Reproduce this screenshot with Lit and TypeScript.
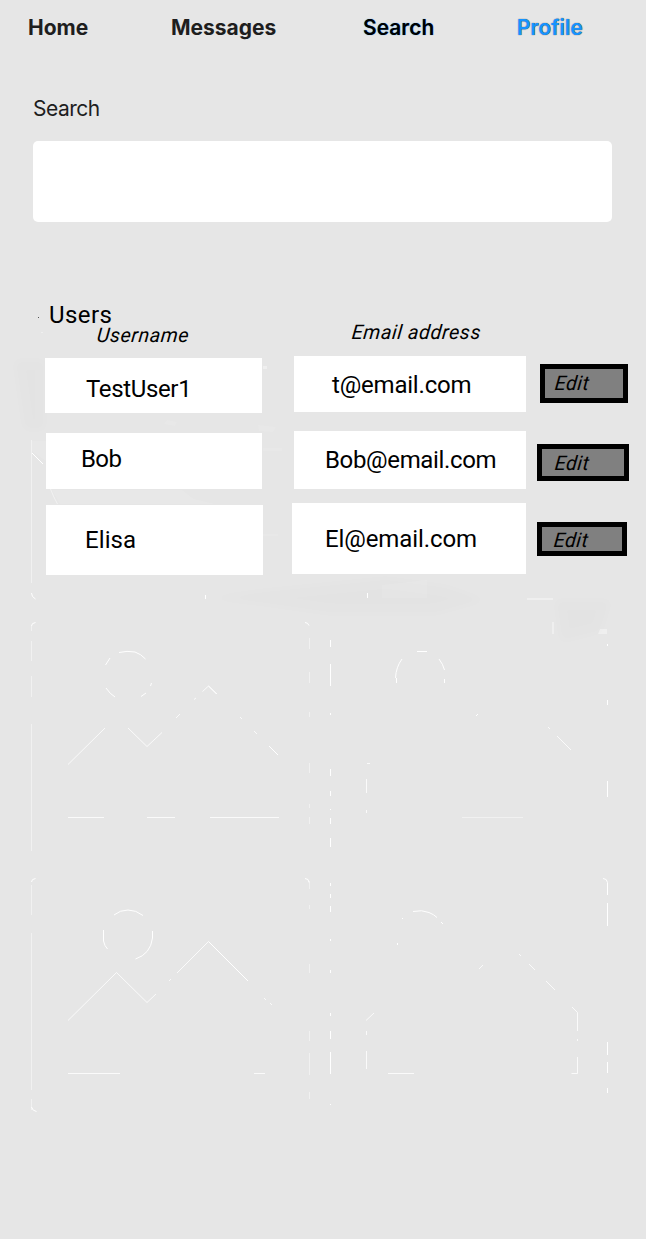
import { LitElement, html, css, svg } from "lit";
import { customElement } from "lit/decorators.js";

const rows = [
  { name: "TestUser1", email: "t@email.com" },
  { name: "Bob", email: "Bob@email.com" },
  { name: "Elisa", email: "El@email.com" },
];

// Faint picture placeholders lying behind the list.
@customElement("ghost-gallery")
export class GhostGallery extends LitElement {
  static styles = css`
    :host { display: block; }
    svg { display: block; }
    .line { fill: none; stroke: #fff; stroke-width: 1; }
    .soft { opacity: 0.45; }
    .mid { opacity: 0.8; }
    .haze { fill: #fff; opacity: 0.1; }
    .dim { fill: #000; opacity: 0.006; filter: blur(4px); }
    .glow { fill: #fff; opacity: 0.35; }
    .speck { fill: #555; }
  `;
  render() {
    return html`<svg width="646" height="1239" viewBox="0 0 646 1239" aria-hidden="true">
      ${svg`
      <path class="speck" d="M38 317h1v1h-1z"/>
      <path class="glow" d="M41 332h2v1h-2z"/>
      <path class="haze" d="M32 441h14v20l-14-10z M167 420l10 2-2 4-11-2z M168 497h17l30 7h-50z M258 425l18 2-3 5-14-1z M382 585l45-5v18h-45z M52 490h130l18 14H60z M263 448h19v3h-19z M263 534h15v2h-15z"/>
      <path class="dim" d="M14 360h31v70H24z M206 598l60-8 120-12 60 8 40 14-50 14H330l-70-10z M555 600h56l-10 32-40 10z"/>
      <path class="glow" d="M263 366h4v3h-4z M527 598h26v2h-26z M552 622h2v12h-2z M600 629h7v5h-9z"/>
      <path class="line soft" d="M31.5 440V583 M50.500 489q3 8 7 15 M31.5 626V631 M31.5 641V661 M31.5 676V697 M31.5 724V851 M309.5 638V649 M309.5 672V683 M309.5 712V717 M309.5 763V773 M309.5 804V808 M309.5 817V824 M31.5 885V915 M31.5 933V1090 M31.5 1099V1110 M309.5 881V889 M309.5 905V909 M309.5 964V973 M309.5 1031V1041 M309.5 1053V1075 M309.5 1092V1099 M462 817.5H523"/>
      <path class="line" d="M32 453l11 11 M31.500 593q0 4 4 6 M205.500 595v4 M367.500 593v5 M31.500 626q0-3 4-3.500 M305 622.500q3 0 4 3 M31.500 882q0-3 4-3.500 M305 878.500q4 0 4 4 M31.500 1107q1 4 5 4.500 M330.500 640V647 M330.500 664V686 M330.500 713V715 M330.500 769V776 M330.500 791V796 M330.500 809V810 M330.500 818V824 M330.500 838V847 M607.500 644V646 M607.500 700V705 M607.500 781V797"/>
      <path class="line" d="M119 652.500q8-2 16-.5q6 2 10.500 7 M105.500 665l4.500-7 M106 688q4 6 9 9 M150.500 686l1-3 M141 696.500l5-3.500"/>
      <path class="line mid" d="M68 764.500L105 728 M128 728L147 746.500L162 732.500 M176 718l4-4 M194 699.500l2-1.500 M202.500 691.500L208.500 686L217 694 M240 717l2 2 M254 731l3 3 M68 817.500h36 M147 817.500h28 M210 817.500h69"/>
      <path class="line" d="M269 746l9 9 M208.500 686l8 8 M208.500 941.500L248 981"/>
      <path class="line" d="M417 651.500h10 M402 659q-6 8-6.500 19 M396.500 678v5 M439 659q4 5 5.500 11 M444.500 679v4 M476 716l2-2"/>
      <path class="line mid" d="M548 727l2 2 M557 736l14 14 M366.500 779V793 M366.500 810V813 M367 763.500h3"/>
      <path class="line" d="M114 915q6-5 14-5t15 5.500 M103.500 930v11q1 5 4 8 M152.500 931v7q-2 16-17 21"/>
      <path class="line mid" d="M68 1020.500L116.500 972.500L147 1002.500L156 994 M169 981l2-2 M177 973L208.500 941.500 M264 998l2 2 M270 1003l2 2 M68 1073.500h52 M254 1073.500h11"/>
      <path class="line" d="M330.500 883V886 M330.500 894V898 M330.500 906V912 M330.500 939V941 M330.500 970V973 M330.500 1013V1016 M330.500 1031V1039 M330.500 1052V1074 M330.500 1104v1 M603 878.500q4 0 4.500 4V895 M607.500 903V926 M607.500 1042V1055 M607.500 1062V1073 M607.500 1088V1093 M413 911.500q9-2 16 1q5 2 8 5 M441 922l2 2 M402 918.500h1 M397.500 943v2"/>
      <path class="line mid" d="M479 969l4-4 M519 954l2 2 M529 964l6 6 M546 981l9 9 M572 1007l5.500 5.500V1031 M366 1020.500l8-7.500 M366.500 1031v4 M366.500 1051v18 M388 1073.500h26 M577.500 1057V1073.500h-6 M577.500 1039v2"/>
      `}
    </svg>`;
  }
}

@customElement("app-root")
export class AppRoot extends LitElement {
  static styles = css`
    * { box-sizing: border-box; }
    :host {
      display: block;
      position: relative;
      width: 646px;
      height: 1239px;
      overflow: hidden;
      background: #e6e6e6;
      color: #000;
      font-family: Roboto, sans-serif;
    }
    ghost-gallery { position: absolute; inset: 0; }
    .page { position: relative; }
    nav {
      display: flex;
      height: 56px;
      padding: 16px 0 0 28px;
      font: 700 21px/24px Inter, sans-serif;
      color: #1e1e1e;
    }
    .home { width: 143px; }
    .messages { width: 192px; }
    .current { width: 154px; color: #000; font-weight: 600; text-shadow: 0 0 1px #1593ff; }
    .profile { color: #1593ff; text-shadow: 0 0 1px #333; font-weight: 600; }
    .label {
      display: block;
      padding: 40px 0 0 33px;
      font: 400 21px/26px Inter, sans-serif;
      letter-spacing: -0.5px;
      color: #1e1e1e;
    }
    .field {
      display: block;
      width: 579.5px;
      height: 81px;
      margin: 19px 0 0 32.500px;
      border: 0;
      border-radius: 5px;
      background: #fff;
    }
    h1 {
      margin: 81px 0 0 49px;
      height: 24px;
      font-size: 24px;
      font-weight: 450;
      line-height: 24px;
      letter-spacing: 0.4px;
    }
    .list { display: flex; align-items: flex-start; }
    .col { display: flex; flex-direction: column; flex: none; }
    .head {
      font-size: 20px;
      line-height: 20px;
      font-style: italic;
      font-weight: 450;
      letter-spacing: 0.55px;
      height: 20px;
      white-space: nowrap;
      transform: skewX(-6deg);
    }
    .names { width: 218px; margin-left: 45px; }
    .names .head { margin: -2px 0 13px 52px; }
    .emails { width: 234px; margin-left: 29px; }
    .emails .head { margin: -5px 0 14px 60px; }
    .actions { width: 92px; margin: 37px 0 0 11px; }
    .cell {
      background: #fff;
      font-size: 24px;
      font-weight: 450;
      line-height: 24px;
      white-space: nowrap;
      letter-spacing: -0.2px;
    }
    .name0 { width: 217px; height: 55px; padding: 19px 0 0 41px; letter-spacing: -0.35px; }
    .name1 { width: 216px; height: 56px; margin: 20px 0 0 1px; padding: 14px 0 0 35px; letter-spacing: -0.6px; }
    .name2 { width: 217px; height: 70px; margin: 16px 0 0 1px; padding: 23px 0 0 39px; letter-spacing: 0.1px; }
    .email0 { width: 232px; height: 56px; margin-left: 2px; padding: 17px 0 0 38px; }
    .email1 { width: 232px; height: 58px; margin: 19px 0 0 2px; padding: 17px 0 0 31px; letter-spacing: -0.35px; }
    .email2 { width: 234px; height: 71px; margin-top: 14px; padding: 24px 0 0 33px; letter-spacing: -0.1px; }
    button {
      border: 5px solid #000;
      border-radius: 0;
      background: #808080;
      color: #000;
      text-align: left;
      font: italic 450 20px/20px Roboto, sans-serif;
      letter-spacing: 0.4px;
      display: flex;
      align-items: flex-start;
    }
    button span { display: block; transform: skewX(-6deg); }
    .edit0 { width: 88px; height: 39px; margin-left: 3px; padding: 4px 0 0 10px; }
    .edit1 { width: 92px; height: 37px; margin-top: 41px; padding: 4px 0 0 13px; }
    .edit2 { width: 90px; height: 34px; margin-top: 41px; padding: 3px 0 0 12px; }
  `;

  render() {
    return html`
      <ghost-gallery></ghost-gallery>
      <div class="page">
        <nav>
          <span class="home">Home</span>
          <span class="messages">Messages</span>
          <span class="current">Search</span>
          <span class="profile">Profile</span>
        </nav>
        <label class="label" for="q">Search</label>
        <input class="field" id="q" />
        <h1>Users</h1>
        <section class="list">
          <div class="col names">
            <div class="head">Username</div>
            ${rows.map((r, i) => html`<div class="cell name${i}">${r.name}</div>`)}
          </div>
          <div class="col emails">
            <div class="head">Email address</div>
            ${rows.map((r, i) => html`<div class="cell email${i}">${r.email}</div>`)}
          </div>
          <div class="col actions">
            ${rows.map((_, i) => html`<button class="edit${i}"><span>Edit</span></button>`)}
          </div>
        </section>
      </div>
    `;
  }
}
